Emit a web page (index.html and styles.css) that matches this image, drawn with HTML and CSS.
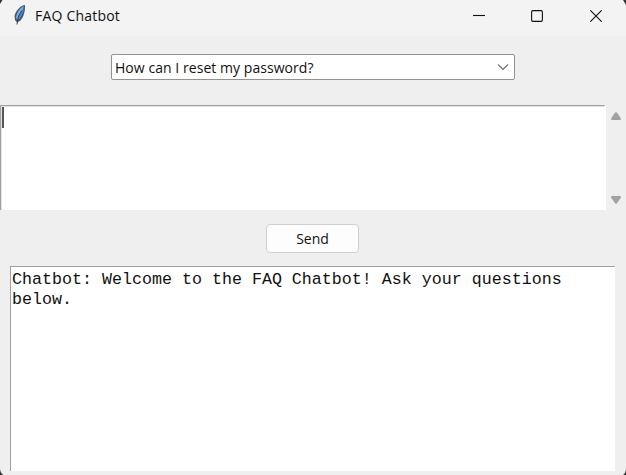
FILE: index.html
```html
<!DOCTYPE html>
<html lang="en">
<head>
<meta charset="utf-8">
<title>FAQ Chatbot</title>
<link rel="stylesheet" href="styles.css">
</head>
<body>
<main class="window">
  <header class="titlebar">
    <svg class="feather" width="14" height="22" viewBox="0 0 14 22">
      <path d="M11.900 1C8 1.500 3 6 1.500 12L2 16L4 18.500L7.500 16.500C10.500 13 12.500 7 11.900 1Z" fill="#46566a"/>
      <path d="M10.800 2C7.500 3.500 4 8 2.900 13L4 16L6.500 13L9 9Z" fill="#78ace9"/>
      <path d="M11 4L10 9L6.500 15L5 15.500L7 10Z" fill="#4c86cb"/>
      <path d="M9 6.500L5.500 12L4 20.500" fill="none" stroke="#26323e" stroke-width=".9"/>
    </svg>
    <span class="caption">FAQ Chatbot</span>
    <div class="controls">
      <svg width="12" height="12" viewBox="0 0 12 12"><path d="M0 5.500H12"/></svg>
      <svg width="12" height="12" viewBox="0 0 12 12"><rect x=".6" y=".6" width="10.800" height="10.800" rx="1.300"/></svg>
      <svg class="close" width="12" height="12" viewBox="0 0 12 12"><path d="M.3 .3L11.700 11.700M11.700 .3L.3 11.700"/></svg>
    </div>
  </header>
  <div class="combo">
    <span class="combo-text">How can I reset my password?</span>
    <svg class="chevron" width="12" height="8" viewBox="0 0 12 8"><path d="M1 1.500L6 6.300L11 1.500"/></svg>
  </div>
  <div class="entry-row">
    <div class="entry"><div class="caret"></div></div>
    <div class="scrollbar">
      <svg width="10" height="8" viewBox="0 0 10 8"><path d="M4.200 .6Q5 -.2 5.800 .6L9.800 6.200Q10.300 7.800 9 8H1Q-.3 7.800 .2 6.200Z"/></svg>
      <svg width="10" height="8" viewBox="0 0 10 8"><path d="M4.200 7.400Q5 8.200 5.800 7.400L9.800 1.800Q10.300 .2 9 0H1Q-.3 .2 .2 1.800Z"/></svg>
    </div>
  </div>
  <button class="send"><span>Send</span></button>
  <div class="log">Chatbot: Welcome to the FAQ Chatbot! Ask your questions<br>below.</div>
  <svg class="corner top-left" width="5" height="5"><path d="M0 0H2.500L0 4Z"/></svg>
  <svg class="corner top-right" width="5" height="5"><path d="M2 0H5V5Z"/></svg>
  <svg class="corner bottom-left" width="5" height="6"><path d="M0 0Q.5 4.500 3.500 6H0Z"/></svg>
  <svg class="corner bottom-right" width="5" height="6"><path d="M5 0Q4.500 4.500 2 6H5Z"/></svg>
</main>
</body>
</html>
```
FILE: styles.css
```css
* { box-sizing: border-box; }
body { margin: 0; overflow: hidden; }
.window {
  position: relative;
  width: 626px;
  height: 475px;
  display: flex;
  flex-direction: column;
  background: #efefef;
  color: #111;
  font-family: "Open Sans", "Noto Sans", sans-serif;
}
.titlebar {
  height: 36px;
  flex: none;
  display: flex;
  align-items: flex-start;
  padding: 4px 24px 0 13px;
  background: #f3f3f3;
}
.caption {
  margin-left: 8px;
  font-size: 14px;
  line-height: 24px;
  letter-spacing: .2px;
  white-space: nowrap;
}
.controls {
  display: flex;
  gap: 46px;
  margin: 6px 0 0 auto;
}
.controls svg { fill: none; stroke: #111; stroke-width: 1.1; }
.controls .close { margin-left: 1px; }
.combo {
  width: 404px;
  height: 26px;
  flex: none;
  margin: 18px 0 0 111px;
  padding: 0 5px 0 3px;
  display: flex;
  align-items: center;
  justify-content: space-between;
  background: #fff;
  border: 1px solid #929292;
  border-radius: 2px;
  font-size: 14px;
}
.combo-text { white-space: nowrap; letter-spacing: .05px; }
.chevron { fill: none; stroke: #777; stroke-width: 1.2; }
.entry-row { display: flex; height: 105px; margin-top: 25px; flex: none; }
.entry {
  width: 606px;
  padding: 1px;
  background: #fff;
  border-top: 1px solid #a0a0a0;
  border-left: 1px solid #a0a0a0;
  border-right: 2px solid #fff;
  box-shadow: inset 1px 1px #e3e3e3;
}
.caret { width: 2px; height: 21px; background: #555; }
.scrollbar {
  width: 20px;
  padding: 7px 0 6px 5px;
  display: flex;
  flex-direction: column;
  justify-content: space-between;
}
.scrollbar svg { fill: #a2a2a2; }
.send {
  width: 93px;
  height: 29px;
  flex: none;
  margin: 14px 0 0 266px;
  padding: 0;
  background: #fdfdfd;
  border: 1px solid #d0d0d0;
  border-radius: 4px;
  color: #111;
  font: 14px "Open Sans", "Noto Sans", sans-serif;
}
.log {
  width: 605px;
  height: 205px;
  flex: none;
  margin: 13px 0 0 10px;
  padding: 3px 0 0 1px;
  background: #fff;
  border-top: 1px solid #a0a0a0;
  border-left: 1px solid #a0a0a0;
  font: 16.667px/20px "Liberation Mono", monospace;
  white-space: nowrap;
}
.corner { position: absolute; fill: #333; }
.top-left { top: 0; left: 0; }
.top-right { top: 0; right: 0; }
.bottom-left { bottom: 0; left: 0; }
.bottom-right { bottom: 0; right: 0; }
```
